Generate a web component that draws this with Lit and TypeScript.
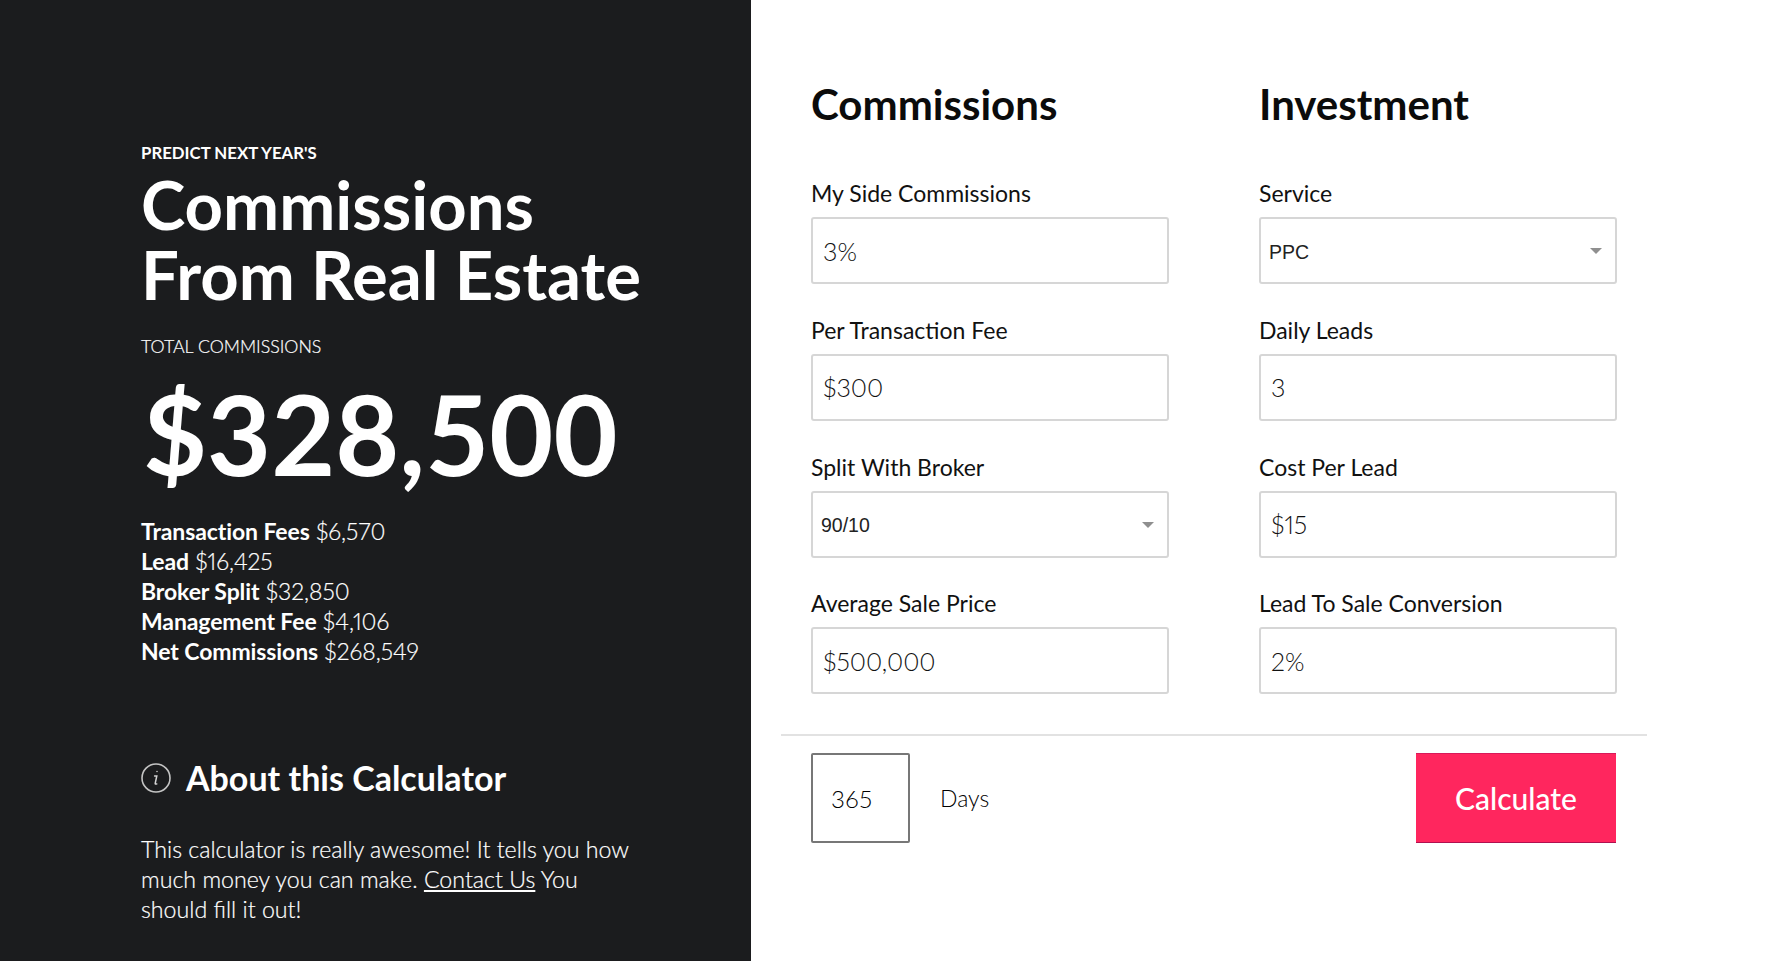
import { LitElement, html, css } from "lit";
import { customElement } from "lit/decorators.js";

@customElement("app-root")
export class AppRoot extends LitElement {
  static styles = css`
    :host { display: block; width: 100%; height: 961px; overflow: hidden; font-family: "Lato", "Liberation Sans", sans-serif; font-variant-numeric: proportional-nums; }
    * { box-sizing: border-box; }
    .page { display: grid; grid-template-columns: 751px 1fr; height: 961px; }
    .side { background: #1b1c1e; color: #fff; padding: 142px 0 0 141px; display: flex; flex-direction: column; }
    .kicker { font-size: 16.8px; font-weight: 700; line-height: 22px; }
    h1 { margin: 5px 0 0; font-size: 67px; line-height: 70px; font-weight: 700; }
    .total-label { margin-top: 25px; font-size: 17.8px; line-height: 24px; font-weight: 300; -webkit-text-stroke: 0.2px #fff; }
    .total { margin: 16px 0 0 2px; font-size: 110.5px; line-height: 120px; font-weight: 700; font-variant-numeric: tabular-nums; }
    .stats { margin-top: 22px; font-size: 23px; line-height: 30px; font-weight: 300; -webkit-text-stroke: 0.2px #fff; }
    .stats b { font-weight: 700; letter-spacing: -0.1px; -webkit-text-stroke: 0; }
    .about { display: flex; align-items: center; gap: 15px; margin-top: 91px; font-size: 34px; line-height: 42px; font-weight: 700; }
    .about svg { width: 30px; height: 30px; flex: none; }
    .desc { margin: 35px 0 0; width: 495px; font-size: 23.2px; line-height: 30px; font-weight: 300; -webkit-text-stroke: 0.2px #fff; }
    .desc a { color: #fff; text-decoration: underline; }
    .main { padding: 0 0 0 30px; }
    .cols { display: grid; grid-template-columns: 358px 358px; column-gap: 90px; padding: 79px 0 0 30px; }
    h2 { margin: 0 0 48px; font-size: 42px; line-height: 50px; font-weight: 700; color: #0b0b0b; }
    .field { display: flex; flex-direction: column; gap: 8px; margin-bottom: 29.8px; }
    label { font-size: 23px; line-height: 32px; color: #111; }
    .box { height: 67px; width: 100%; border: 2px solid #d6d6d6; border-radius: 3px; background: #fff; font: 300 25px "Lato", sans-serif; font-variant-numeric: proportional-nums; color: #111; padding: 0 10px; outline: none; }
    .select-wrap { position: relative; display: block; }
    select.box { appearance: none; -webkit-appearance: none; font: 400 19.5px "Liberation Sans", sans-serif; color: #222; padding: 2px 8px 0; }
    .caret { position: absolute; right: 15px; top: 31px; width: 12px; height: 6px; }
    .rule { height: 2px; background: #e2e2e2; width: 866px; margin-top: 10px; }
    .bottom { display: flex; align-items: center; width: 866px; padding: 17px 31px 0 30px; }
    .days { width: 99px; height: 90px; border: 2px solid #777; border-radius: 2px; font: 300 24px "Lato", sans-serif; padding: 0 18px; color: #000; outline: none; }
    .unit { margin-left: 30px; font-size: 23px; font-weight: 300; color: #000; }
    .go { margin-left: auto; width: 200px; height: 90px; border: none; border-top: 1px solid #d81a5a; border-bottom: 1px solid #b01050; background: #ff265e; color: #fff; font: 500 30px "Lato", sans-serif; }
  `;

  field(label: string, value: string) {
    return html`<div class="field"><label>${label}</label><input class="box" .value=${value} /></div>`;
  }
  pick(label: string, value: string) {
    return html`<div class="field"><label>${label}</label><span class="select-wrap"><select class="box"><option>${value}</option></select><svg class="caret" viewBox="0 0 12 6"><path d="M0 0H12L6 6Z" fill="#8f8f8f"/></svg></span></div>`;
  }

  render() {
    return html`<div class="page">
      <section class="side">
        <div class="kicker">PREDICT NEXT YEAR'S</div>
        <h1>Commissions<br />From Real Estate</h1>
        <div class="total-label">TOTAL COMMISSIONS</div>
        <div class="total">$328,500</div>
        <div class="stats">
          <div><b>Transaction Fees</b> $6,570</div>
          <div><b>Lead</b> $16,425</div>
          <div><b>Broker Split</b> $32,850</div>
          <div><b>Management Fee</b> $4,106</div>
          <div><b>Net Commissions</b> $268,549</div>
        </div>
        <div class="about">
          <svg viewBox="0 0 30 30"><circle cx="15" cy="15" r="14" fill="none" stroke="#c4c4c4" stroke-width="1.6"/><path d="M16 8.4v.2M13.6 13h2.2l-1.6 7.4c-.1.6.3.9 1.6.5" fill="none" stroke="#d4d4d4" stroke-width="1.5" stroke-linecap="round"/></svg>
          <span>About this Calculator</span>
        </div>
        <p class="desc">This calculator is really awesome! It tells you how much money you can make. <a href="#">Contact Us</a> You should fill it out!</p>
      </section>
      <section class="main">
        <div class="cols">
          <div>
            <h2>Commissions</h2>
            ${this.field("My Side Commissions", "3%")}
            ${this.field("Per Transaction Fee", "$300")}
            ${this.pick("Split With Broker", "90/10")}
            ${this.field("Average Sale Price", "$500,000")}
          </div>
          <div>
            <h2>Investment</h2>
            ${this.pick("Service", "PPC")}
            ${this.field("Daily Leads", "3")}
            ${this.field("Cost Per Lead", "$15")}
            ${this.field("Lead To Sale Conversion", "2%")}
          </div>
        </div>
        <div class="rule"></div>
        <div class="bottom">
          <input class="days" .value=${"365"} />
          <span class="unit">Days</span>
          <button class="go">Calculate</button>
        </div>
      </section>
    </div>`;
  }
}
